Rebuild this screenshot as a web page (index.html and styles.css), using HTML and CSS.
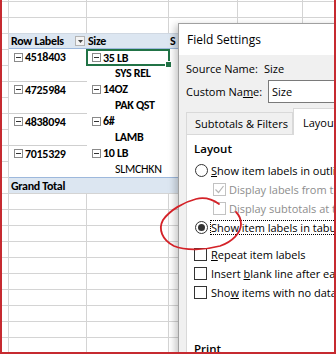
FILE: index.html
```html
<!DOCTYPE html>
<html>
<head>
<meta charset="utf-8">
<link rel="stylesheet" href="styles.css">
</head>
<body>
<div class="sheet">
  <div class="grid">
    <div class="pivot">
      <div class="hc hb"><span>Row Labels</span><span class="dd"><svg width="5" height="3" viewBox="0 0 5 3"><path d="M0 0h5L2.5 3z" fill="#444"/></svg></span></div>
      <div class="hc">Size</div>
      <div class="hc">S</div>

      <div class="pc"><i class="mx"></i>4518403</div>
      <div class="pc sel"><i class="mx"></i>35 LB<b class="handle"></b></div>
      <div class="pc"></div>

      <div class="pc"></div>
      <div class="pc l2">SYS REL</div>
      <div class="pc"></div>

      <div class="pc grp"><i class="mx"></i>4725984</div>
      <div class="pc"><i class="mx"></i>14OZ</div>
      <div class="pc"></div>

      <div class="pc"></div>
      <div class="pc l2">PAK QST</div>
      <div class="pc"></div>

      <div class="pc grp"><i class="mx"></i>4838094</div>
      <div class="pc"><i class="mx"></i>6#</div>
      <div class="pc"></div>

      <div class="pc"></div>
      <div class="pc l2">LAMB</div>
      <div class="pc"></div>

      <div class="pc grp"><i class="mx"></i>7015329</div>
      <div class="pc"><i class="mx"></i>10 LB</div>
      <div class="pc"></div>

      <div class="pc"></div>
      <div class="pc l2 reg">SLMCHKN</div>
      <div class="pc"></div>

      <div class="gt">Grand Total</div>
      <div class="gt"></div>
      <div class="gt"></div>
    </div>
  </div>

  <div class="dialog">
    <div class="title">Field Settings</div>
    <div class="dbody">
      <div class="frow src"><span class="flabel">Source Name:</span><span>Size</span></div>
      <div class="frow cust"><span class="flabel wide">Custom Na<u>m</u>e:</span><span class="input">Size</span></div>
      <div class="tabs">
        <div class="tab">Subtotals &amp; Filters</div>
        <div class="tab active">Layout &amp; Print</div>
      </div>
      <div class="panel">
        <div class="heading">Layout</div>
        <div class="opts">
          <div class="opt"><span class="radio"></span><span><u>S</u>how item labels in outline form</span></div>
          <div class="opt sub dis"><span class="cb dis"><svg width="11" height="11" viewBox="0 0 11 11"><path d="M1.5 5.5l3 3l5-6.5" fill="none" stroke="#b5b5b5" stroke-width="1.2"/></svg></span><span>Display labels from the next field</span></div>
          <div class="opt sub dis"><span class="cb dis"></span><span>Display subtotals at top of every group</span></div>
          <div class="opt"><span class="radio on"></span><span class="focus">Show item labels in tabular form</span></div>
        </div>
        <div class="opts second">
          <div class="opt chk"><span class="cb"></span><span><u>R</u>epeat item labels</span></div>
          <div class="opt chk"><span class="cb"></span><span>Insert <u>b</u>lank line after each item label</span></div>
          <div class="opt chk"><span class="cb"></span><span>Sho<u>w</u> items with no data</span></div>
        </div>
        <div class="heading print">Print</div>
      </div>
    </div>
  </div>

  <svg class="annot" width="336" height="354" viewBox="0 0 336 354">
    <path d="M219 204 C212 199, 204 197, 196 199 C184 202, 170 210, 163 220 C158 229, 162 240, 174 246 C186 251, 205 250, 220 246 C232 242, 241 233, 241 224 C241 219, 239 215, 236 212" fill="none" stroke="#d42228" stroke-width="1.8" stroke-linecap="round"/>
  </svg>
</div>
</body>
</html>
```

FILE: styles.css
```css
html, body {
  margin: 0;
  padding: 0;
  background: #fff;
}

.sheet {
  position: relative;
  width: 336px;
  height: 354px;
  box-sizing: border-box;
  border: 2px solid #c62a30;
  border-top: 0;
  overflow: hidden;
  background: #fff;
}

.grid {
  height: 100%;
  box-sizing: border-box;
  padding: 33px 0 0 7px;
  background:
    linear-gradient(#d4d4d4, #d4d4d4) 6px 0 / 1px 100% no-repeat,
    linear-gradient(#d4d4d4, #d4d4d4) 84px 0 / 1px 100% no-repeat,
    linear-gradient(#d4d4d4, #d4d4d4) 166px 0 / 1px 100% no-repeat,
    linear-gradient(#d4d4d4, #d4d4d4) 235px 0 / 1px 100% no-repeat,
    linear-gradient(#d4d4d4, #d4d4d4) 300px 0 / 1px 100% no-repeat,
    repeating-linear-gradient(to bottom, transparent 0 1px, #d4d4d4 1px 2px, transparent 2px 16px);
}

.pivot {
  display: grid;
  grid-template-columns: 78px 82px 69px;
  grid-auto-rows: 16px;
  width: 229px;
  background: #fff;
  font-family: "Calibri", "Carlito", "Lato", sans-serif;
  font-weight: 700;
  font-size: 12px;
  letter-spacing: -0.3px;
  color: #000;
}

.pivot > div {
  box-sizing: border-box;
  display: flex;
  align-items: center;
  white-space: nowrap;
  min-width: 0;
}

.hc {
  background: #dce6f1;
  border-top: 1px solid #d0d8e2;
  border-bottom: 1px solid #9db8dc;
  padding-left: 1px;
}

.hb {
  padding-left: 2px;
}

.dd {
  margin-left: auto;
  margin-right: 2px;
  width: 10px;
  height: 10px;
  box-sizing: border-box;
  border: 1px solid #b4b4b4;
  background: #f4f4f4;
  display: flex;
  align-items: center;
  justify-content: center;
}

.pc {
  padding-left: 5px;
}

.grp {
  border-top: 1px solid #cfcfcf;
}

.l2 {
  padding-left: 28px;
}

.reg {
  font-weight: 400;
}

.mx {
  position: relative;
  display: inline-block;
  width: 9px;
  height: 9px;
  box-sizing: border-box;
  border: 1px solid #8a8a8a;
  background: #fff;
  margin-right: 2px;
  flex: none;
}

.mx::after {
  content: "";
  position: absolute;
  left: 1px;
  top: 3px;
  width: 5px;
  height: 1px;
  background: #333;
}

.sel {
  position: relative;
  margin: 0 -1px -1px -1px;
  border: 2px solid #217346;
  padding-left: 4px;
}

.handle {
  position: absolute;
  right: -4px;
  bottom: -4px;
  width: 5px;
  height: 5px;
  background: #217346;
  border: 1px solid #fff;
}

.gt {
  background: #dce6f1;
  border-top: 1px solid #9db8dc;
  padding-left: 2px;
}

/* Dialog */
.dialog {
  position: absolute;
  left: 176px;
  top: 23px;
  width: 220px;
  height: 360px;
  background: #f0f0f0;
  border: 1px solid #a0a0a0;
  box-shadow: -3px 2px 7px rgba(0, 0, 0, 0.22);
  font-family: "Segoe UI", "Open Sans", sans-serif;
  font-size: 11px;
  color: #000;
  z-index: 2;
}

.title {
  height: 31px;
  background: #fff;
  display: flex;
  align-items: center;
  padding-left: 8px;
  font-size: 12px;
}

.dbody {
  padding-left: 7px;
}

.frow {
  display: flex;
  align-items: center;
  white-space: nowrap;
}

.src {
  height: 20px;
  margin-top: 3px;
}

.cust {
  height: 23px;
  margin-top: 2px;
}

.flabel {
  width: 78px;
  flex: none;
}

.flabel.wide {
  width: 82px;
}

u {
  text-decoration: underline;
  text-underline-offset: 1px;
}

.input {
  flex: 1;
  height: 23px;
  box-sizing: border-box;
  border: 1px solid #7a7a7a;
  background: #fff;
  display: flex;
  align-items: center;
  padding-left: 3px;
}

.tabs {
  display: flex;
  align-items: flex-end;
  height: 26px;
  margin-top: 5px;
  white-space: nowrap;
}

.tab {
  box-sizing: border-box;
  height: 22px;
  width: 111px;
  border: 1px solid #d9d9d9;
  border-bottom: 0;
  background: #f0f0f0;
  display: flex;
  align-items: center;
  padding-left: 8px;
}

.tab.active {
  height: 27px;
  width: 110px;
  margin-bottom: -1px;
  background: #fff;
  padding-left: 9px;
  position: relative;
  z-index: 1;
}

.panel {
  height: 240px;
  background: #fff;
  border: 1px solid #d9d9d9;
  padding: 4px 0 0 7px;
  white-space: nowrap;
}

.heading {
  height: 19px;
  display: flex;
  align-items: center;
  font-weight: 600;
  font-size: 11.5px;
}

.opts {
  margin-top: 3px;
  display: flex;
  flex-direction: column;
}

.opts.second {
  margin-top: 8px;
}

.opt {
  height: 19px;
  display: flex;
  align-items: center;
  gap: 3px;
}

.opt.chk {
  gap: 4px;
}

.opt.sub {
  padding-left: 19px;
}

.opt.dis {
  color: #8d8d8d;
}

.radio {
  box-sizing: border-box;
  width: 13px;
  height: 13px;
  margin-left: 1px;
  border: 1px solid #333;
  border-radius: 50%;
  background: #fff;
  flex: none;
  display: flex;
  align-items: center;
  justify-content: center;
}

.radio.on::after {
  content: "";
  width: 7px;
  height: 7px;
  border-radius: 50%;
  background: #333;
}

.cb {
  box-sizing: border-box;
  width: 13px;
  height: 13px;
  border: 1px solid #333;
  background: #fff;
  flex: none;
  display: flex;
  align-items: center;
  justify-content: center;
}

.cb.dis {
  border-color: #c2c2c2;
}

.focus {
  border: 1px dotted #000;
  margin-left: -1px;
  padding: 0 1px 0 0;
  line-height: 13px;
}

.print {
  margin-top: 37px;
}

.annot {
  position: absolute;
  left: -2px;
  top: 0;
  z-index: 3;
  pointer-events: none;
}
```
